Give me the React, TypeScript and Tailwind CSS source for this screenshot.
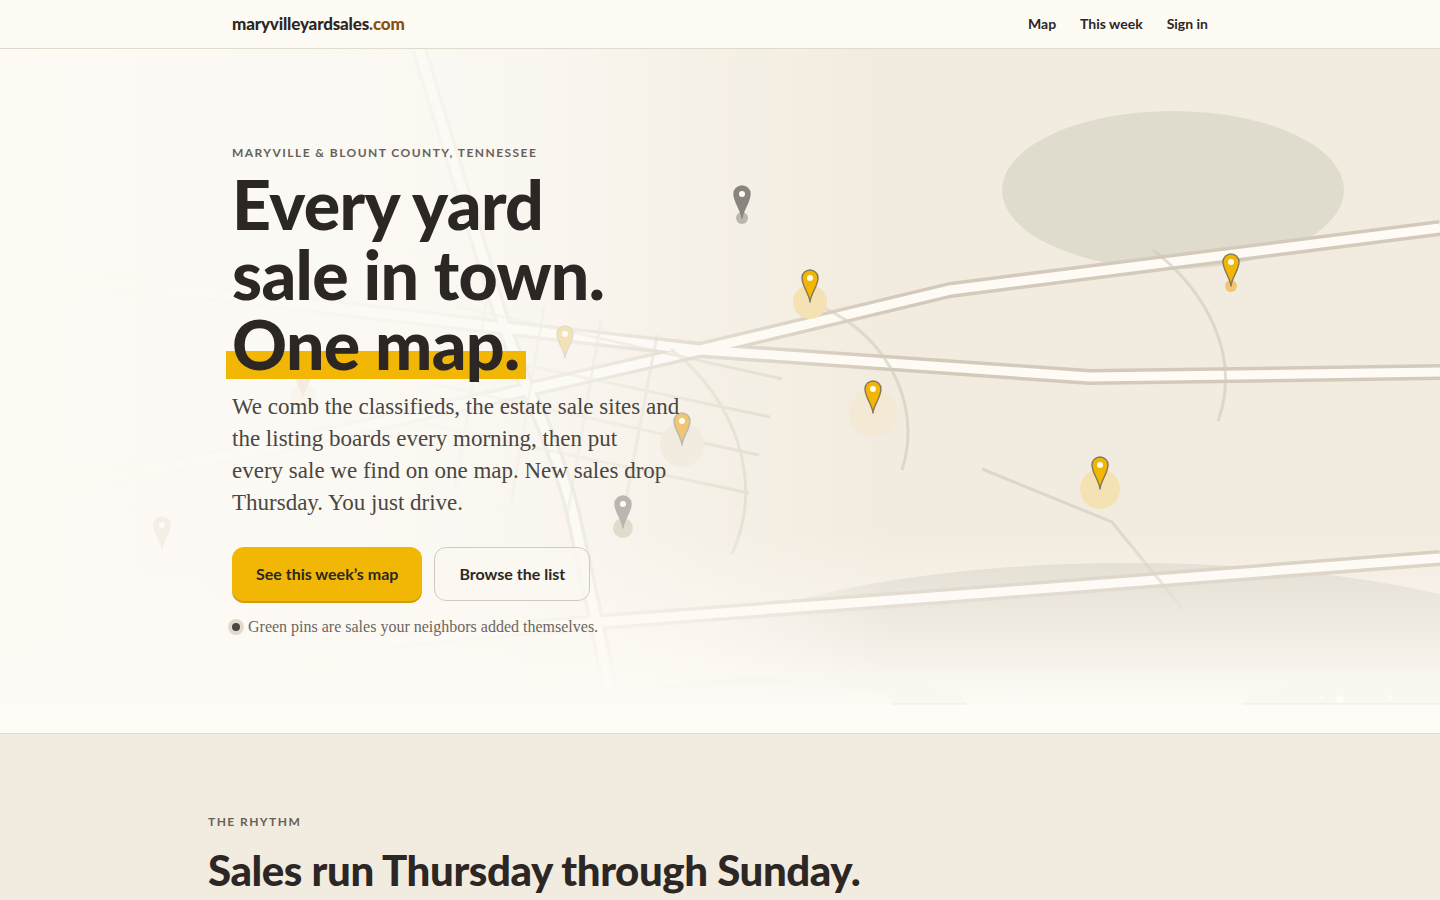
// ===================================
// Landing page - header, map hero, weekly rhythm
// ===================================

interface Pin {
  x: number
  y: number
  fill: string
  stroke: string
  opacity?: number
  haloRadius?: number
  haloFill?: string
}

const navLinks = [
  { label: 'Map', href: '#map' },
  { label: 'This week', href: '#this-week' },
  { label: 'Sign in', href: '#sign-in' },
]

// x / y is the tip of the pin
const pins: Pin[] = [
  { x: 742, y: 218, fill: '#87857e', stroke: '#87857e', haloRadius: 6, haloFill: '#bab7b0' },
  { x: 810, y: 302, fill: '#f2b705', stroke: '#87765a', haloRadius: 17, haloFill: '#f4e2b5' },
  { x: 1231, y: 286, fill: '#f2b705', stroke: '#87765a', haloRadius: 6, haloFill: '#f0c574' },
  { x: 873, y: 413, fill: '#f2b705', stroke: '#87765a', haloRadius: 24, haloFill: '#f3e9d5' },
  { x: 1100, y: 489, fill: '#f2b705', stroke: '#87765a', haloRadius: 20, haloFill: '#f4e2b5' },
  { x: 565, y: 358, fill: '#f4e2b5', stroke: '#dfdccd' },
  { x: 682, y: 445, fill: '#f0c574', stroke: '#bab7b0', haloRadius: 22, haloFill: '#f2ebdf' },
  { x: 623, y: 528, fill: '#bab7b0', stroke: '#bab7b0', haloRadius: 10, haloFill: '#dfdccd' },
  { x: 303, y: 397, fill: '#f2ebdf', stroke: '#f2ebdf', haloRadius: 13, haloFill: '#f8f5ee' },
  { x: 162, y: 549, fill: '#f2ebdf', stroke: '#f2ebdf', opacity: 0.7 },
]

const roads = [
  'M0 495 L260 450 L530 389 L700 350 L950 290 L1440 228',
  'M0 276 L200 292 L480 325 L700 350 L1090 377 L1440 372',
  'M419 49 L502 320 L527 388 Q560 460 573 513 L594 610 L612 700',
  'M0 690 Q300 645 600 622 L960 595 L1440 558',
]

const streets = [
  'M455 306 L782 379',
  'M440 347 L770 417',
  'M433 384 L759 455',
  'M425 424 L749 493',
  'M657 335 L625 505',
  'M601 321 L567 517',
  'M544 307 L511 503',
  'M488 293 L455 488',
  'M671 349 C735 400 765 480 732 554',
  'M810 303 C880 325 925 400 902 470',
  'M1153 250 C1205 290 1242 355 1218 421',
  'M982 469 L1112 522 L1182 608',
]

function MapPin({ pin }: { pin: Pin }) {
  return (
    <g transform={`translate(${pin.x} ${pin.y})`} opacity={pin.opacity ?? 1}>
      {pin.haloRadius && <circle r={pin.haloRadius} fill={pin.haloFill} />}
      <path
        d="M0 0 C-0.6 -8 -8 -16 -8 -24 A8 8 0 0 1 8 -24 C8 -16 0.6 -8 0 0 Z"
        fill={pin.fill}
        stroke={pin.stroke}
        strokeWidth="1.4"
        strokeLinejoin="round"
      />
      <circle cy="-24" r="3" fill="#fffbf5" />
    </g>
  )
}

function MapBackdrop() {
  return (
    <svg
      className="absolute inset-0 h-full w-full"
      viewBox="0 49 1440 684"
      preserveAspectRatio="xMidYMid slice"
      aria-hidden="true"
    >
      <defs>
        <linearGradient id="fade-left" gradientUnits="userSpaceOnUse" x1="0" y1="0" x2="890" y2="0">
          <stop offset="0" stopColor="#fefaf4" stopOpacity="1" />
          <stop offset="0.3" stopColor="#fcfaf5" stopOpacity="0.96" />
          <stop offset="0.5" stopColor="#fcfaf5" stopOpacity="0.88" />
          <stop offset="0.66" stopColor="#fcfaf5" stopOpacity="0.68" />
          <stop offset="0.8" stopColor="#fbf9f2" stopOpacity="0.38" />
          <stop offset="1" stopColor="#fbf9f2" stopOpacity="0" />
        </linearGradient>
        <linearGradient id="fade-bottom" gradientUnits="userSpaceOnUse" x1="0" y1="530" x2="0" y2="705">
          <stop offset="0" stopColor="#fefaf5" stopOpacity="0" />
          <stop offset="0.6" stopColor="#fefaf5" stopOpacity="0.6" />
          <stop offset="1" stopColor="#fefbf6" stopOpacity="1" />
        </linearGradient>
        <linearGradient id="hill" gradientUnits="userSpaceOnUse" x1="690" y1="0" x2="880" y2="0">
          <stop offset="0" stopColor="#dedacd" stopOpacity="0" />
          <stop offset="1" stopColor="#dedacd" stopOpacity="1" />
        </linearGradient>
      </defs>

      <rect y="49" width="1440" height="684" fill="#f2ebdf" />
      <ellipse cx="1173" cy="190" rx="171" ry="79" fill="#dfdccd" />
      <ellipse cx="1130" cy="683" rx="460" ry="120" fill="url(#hill)" />

      <g fill="none" strokeLinejoin="round">
        {roads.map((d) => (
          <path key={d} d={d} stroke="#d4cabb" strokeWidth="16" />
        ))}
        {roads.map((d) => (
          <path key={d} d={d} stroke="#fefbf5" strokeWidth="9" />
        ))}
      </g>
      <g fill="none" stroke="#cfccba" strokeWidth="3" opacity="0.6">
        {streets.map((d) => (
          <path key={d} d={d} />
        ))}
      </g>

      <rect y="49" width="890" height="684" fill="url(#fade-left)" />
      <rect y="530" width="1440" height="174" fill="url(#fade-bottom)" />
      <rect y="704" width="1440" height="29" fill="#fefcf7" />

      {/* Ridge line along the lower edge */}
      <path
        d="M650 689 C720 670 850 674 958 692 L968 704 L892 704 L888 692 C810 684 730 686 650 689 Z"
        fill="#f9f6ef"
        opacity="0.7"
      />
      <path d="M1243 704 L1250 693 C1300 684 1380 682 1440 683 V704 Z" fill="#f9f6ef" opacity="0.8" />
      <path d="M892 704 H966 M1243 704 H1440" stroke="#efebe3" />
      <circle cx="1340" cy="699" r="4" fill="#fefcf7" />
      <circle cx="1390" cy="698" r="3" fill="#fefcf7" />
      <circle cx="1321" cy="698" r="2" fill="#fefcf7" />

      {pins.map((pin) => (
        <MapPin key={`${pin.x}-${pin.y}`} pin={pin} />
      ))}
    </svg>
  )
}

function Header() {
  return (
    <header className="border-b border-[#dfdccd] bg-[#fefaf4]">
      <div className="mx-auto flex h-12 max-w-5xl items-center justify-between px-6">
        <a href="#top" className="text-[17px] font-black tracking-[-0.01em]">
          maryvilleyardsales<span className="text-[#855112]">.com</span>
        </a>
        <nav className="flex gap-6 text-sm font-bold">
          {navLinks.map((link) => (
            <a key={link.href} href={link.href}>
              {link.label}
            </a>
          ))}
        </nav>
      </div>
    </header>
  )
}

function Hero() {
  return (
    <section className="relative overflow-hidden border-b border-[#dfdccd] bg-[#fefaf4]">
      <MapBackdrop />
      <div className="relative mx-auto max-w-5xl px-6 py-24">
        <p className="text-xs font-bold uppercase tracking-[0.12em] text-[#66615a]">
          Maryville &amp; Blount County, Tennessee
        </p>
        <h1 className="mt-2 text-[68px] leading-[70px] font-black tracking-[-0.01em]">
          Every yard
          <br />
          sale in town.
          <br />
          <span className="relative -ml-1.5 inline-block px-1.5">
            <span className="absolute inset-x-0 bottom-0 h-7 bg-[#f2b705]" />
            <span className="relative">One map.</span>
          </span>
        </h1>
        <p className="mt-3 max-w-md font-['Liberation_Serif',serif] text-[23px] leading-8 text-[#4b4641]">
          We comb the classifieds, the estate sale sites and the listing boards every morning, then put
          <br className="hidden sm:inline" /> every sale we find on one map. New sales drop Thursday.
          You just drive.
        </p>
        <div className="mt-7 flex flex-wrap items-start gap-3 font-bold">
          <a
            href="#map"
            className="rounded-xl bg-[#f2b705] px-6 py-[15px] shadow-[0_2px_0_#cf9a0d]"
          >
            See this week’s map
          </a>
          <a
            href="#list"
            className="rounded-xl border border-[#d4cabb] bg-[#faf7f0]/80 px-6 py-3.5"
          >
            Browse the list
          </a>
        </div>
        <p className="mt-4 flex items-center gap-2 font-['Liberation_Serif',serif] text-base leading-5 text-[#6b665e]">
          <span className="size-2 rounded-full bg-[#4b4641] ring-4 ring-[#dfdccd]" />
          Green pins are sales your neighbors added themselves.
        </p>
      </div>
    </section>
  )
}

function Rhythm() {
  return (
    <section className="bg-[#f2ebdf] py-20">
      <div className="mx-auto max-w-5xl">
        <p className="text-xs font-bold uppercase tracking-[0.12em] text-[#66615a]">The rhythm</p>
        <h2 className="mt-4 text-[42px] leading-[48px] font-black tracking-[-0.01em]">
          Sales run Thursday through Sunday.
        </h2>
      </div>
    </section>
  )
}

export default function App() {
  return (
    <div className="min-h-screen bg-[#f2ebdf] font-['Lato',sans-serif] text-[#2c2724]">
      <Header />
      <main>
        <Hero />
        <Rhythm />
      </main>
    </div>
  )
}
